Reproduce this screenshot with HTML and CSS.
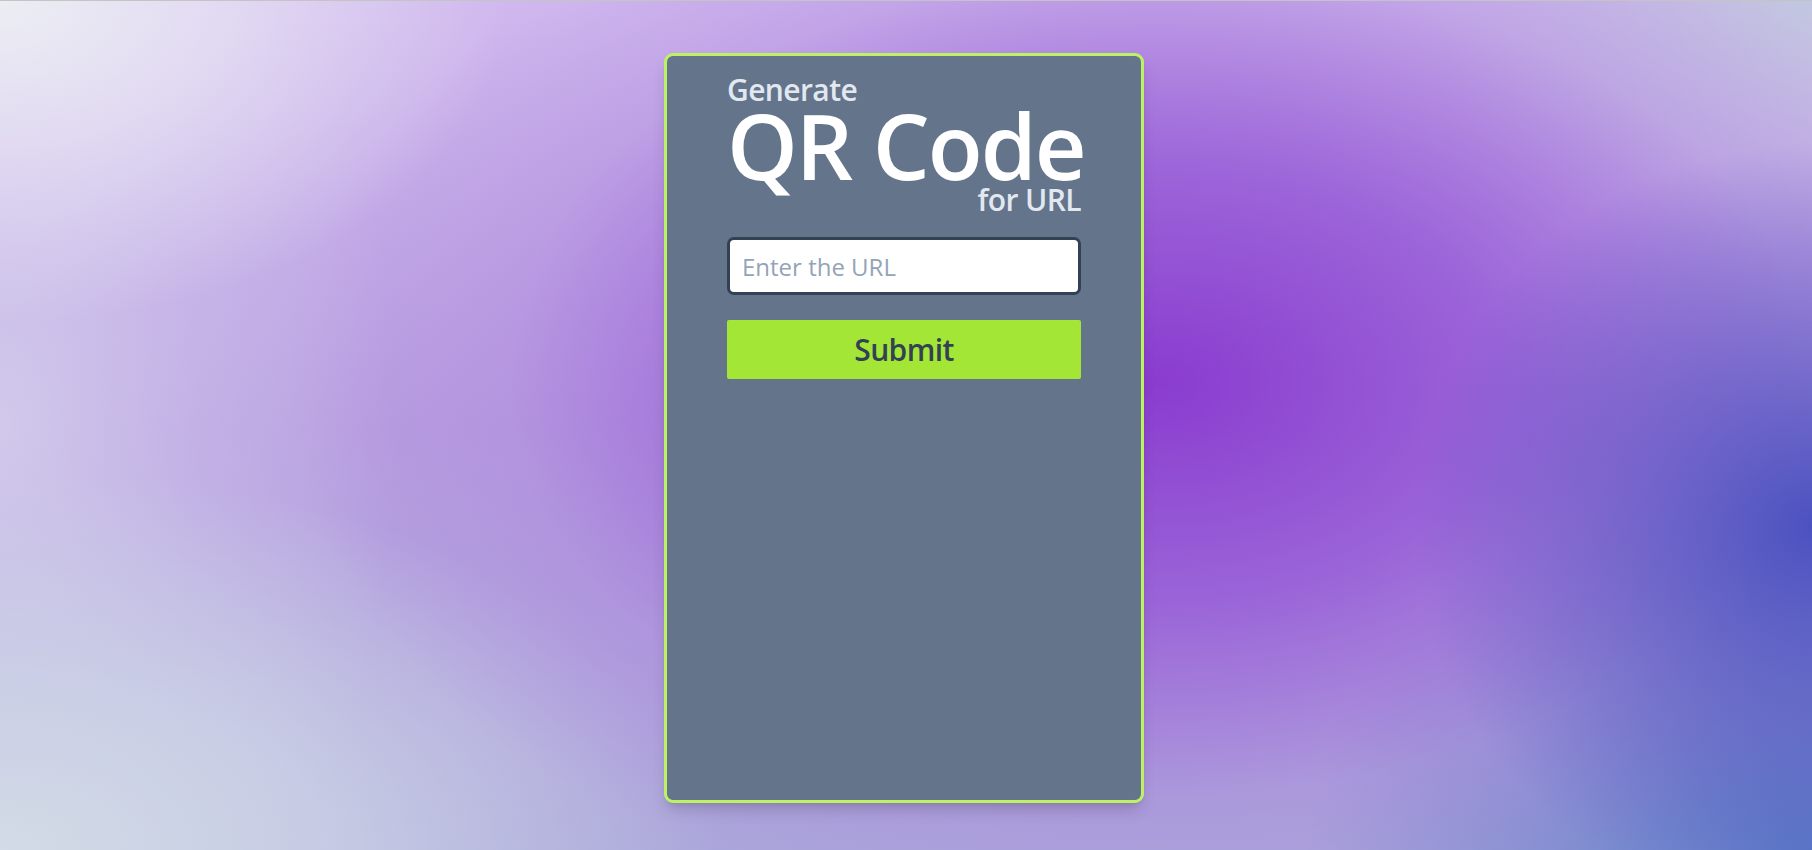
FILE: index.html
```html
<!DOCTYPE html>
<html lang="en">
<head>
<meta charset="utf-8">
<title>QR Code Generator</title>
<link rel="stylesheet" href="styles.css">
</head>
<body>
<main class="page">
  <section class="card">
    <header class="title">
      <div class="title-small">Generate</div>
      <h1 class="title-big">QR Code</h1>
      <div class="title-small title-right">for URL</div>
    </header>
    <form class="form">
      <input class="url-input" type="text" placeholder="Enter the URL">
      <button class="submit" type="button">Submit</button>
    </form>
  </section>
</main>
</body>
</html>
```

FILE: styles.css
```css
* { box-sizing: border-box; }
html, body { margin: 0; padding: 0; height: 100%; }
body {
  font-family: "Open Sans", "Noto Sans", sans-serif;
  border-top: 1px solid #c4c4c4;
  background-color: #b9b4e0;
  background-image:
    radial-gradient(ellipse 22% 45% at 100% 62%, rgba(70, 78, 190, 0.95) 0%, rgba(80, 80, 190, 0.45) 55%, rgba(80, 80, 190, 0) 100%),
    radial-gradient(ellipse 48% 65% at 64% 45%, #8a3ccf 0%, rgba(150, 90, 215, 0.85) 40%, rgba(170, 130, 220, 0.35) 75%, rgba(180, 150, 220, 0) 100%),
    radial-gradient(ellipse 28% 38% at 0% 0%, #eceef3 0%, rgba(232, 228, 244, 0.75) 45%, rgba(220, 200, 240, 0) 100%),
    radial-gradient(ellipse 40% 45% at 0% 100%, #d2dbe6 0%, rgba(205, 212, 230, 0.8) 45%, rgba(200, 200, 230, 0) 100%),
    radial-gradient(ellipse 22% 75% at 0% 50%, rgba(212, 205, 236, 0.9) 0%, rgba(205, 195, 235, 0.5) 50%, rgba(200, 190, 235, 0) 100%),
    radial-gradient(ellipse 28% 45% at 100% 100%, #5b7ac7 0%, rgba(90, 120, 200, 0) 100%),
    radial-gradient(ellipse 22% 30% at 100% 0%, #c2c6e0 0%, rgba(190, 195, 225, 0) 100%),
    linear-gradient(180deg, #d0b8ee 0%, #b89ee0 50%, #aaa6da 100%);
}
.page {
  display: flex;
  justify-content: center;
  padding-top: 52px;
  padding-right: 4px;
}
.card {
  width: 480px;
  height: 750px;
  background: #64748b;
  border: 3px solid #bef264;
  border-radius: 9px;
  box-shadow: 0 10px 15px -3px rgba(0,0,0,0.15), 0 4px 6px -4px rgba(0,0,0,0.12);
  padding: 19px 60px 0;
  display: flex;
  flex-direction: column;
}
.title {
  display: flex;
  flex-direction: column;
}
.title-small {
  font-size: 30px;
  line-height: 30px;
  font-weight: 600;
  color: #e2e8f0;
  letter-spacing: -0.6px;
}
.title-right { text-align: right; }
.title-big {
  margin: 0;
  font-size: 90px;
  line-height: 80px;
  font-weight: 600;
  color: #ffffff;
  letter-spacing: -2px;
  white-space: nowrap;
}
.form {
  display: flex;
  flex-direction: column;
  gap: 25px;
  margin-top: 22px;
}
.url-input {
  width: 100%;
  height: 58px;
  border: 3px solid #334155;
  border-radius: 7px;
  background: #ffffff;
  padding: 0 12px;
  font-family: inherit;
  font-size: 24px;
  color: #334155;
  outline: none;
}
.url-input::placeholder { color: #94a3b8; }
.submit {
  width: 100%;
  height: 59px;
  border: none;
  border-radius: 2px;
  background: #a3e635;
  color: #334155;
  font-family: inherit;
  font-size: 30px;
  font-weight: 600;
  letter-spacing: -0.6px;
  cursor: pointer;
}
```
